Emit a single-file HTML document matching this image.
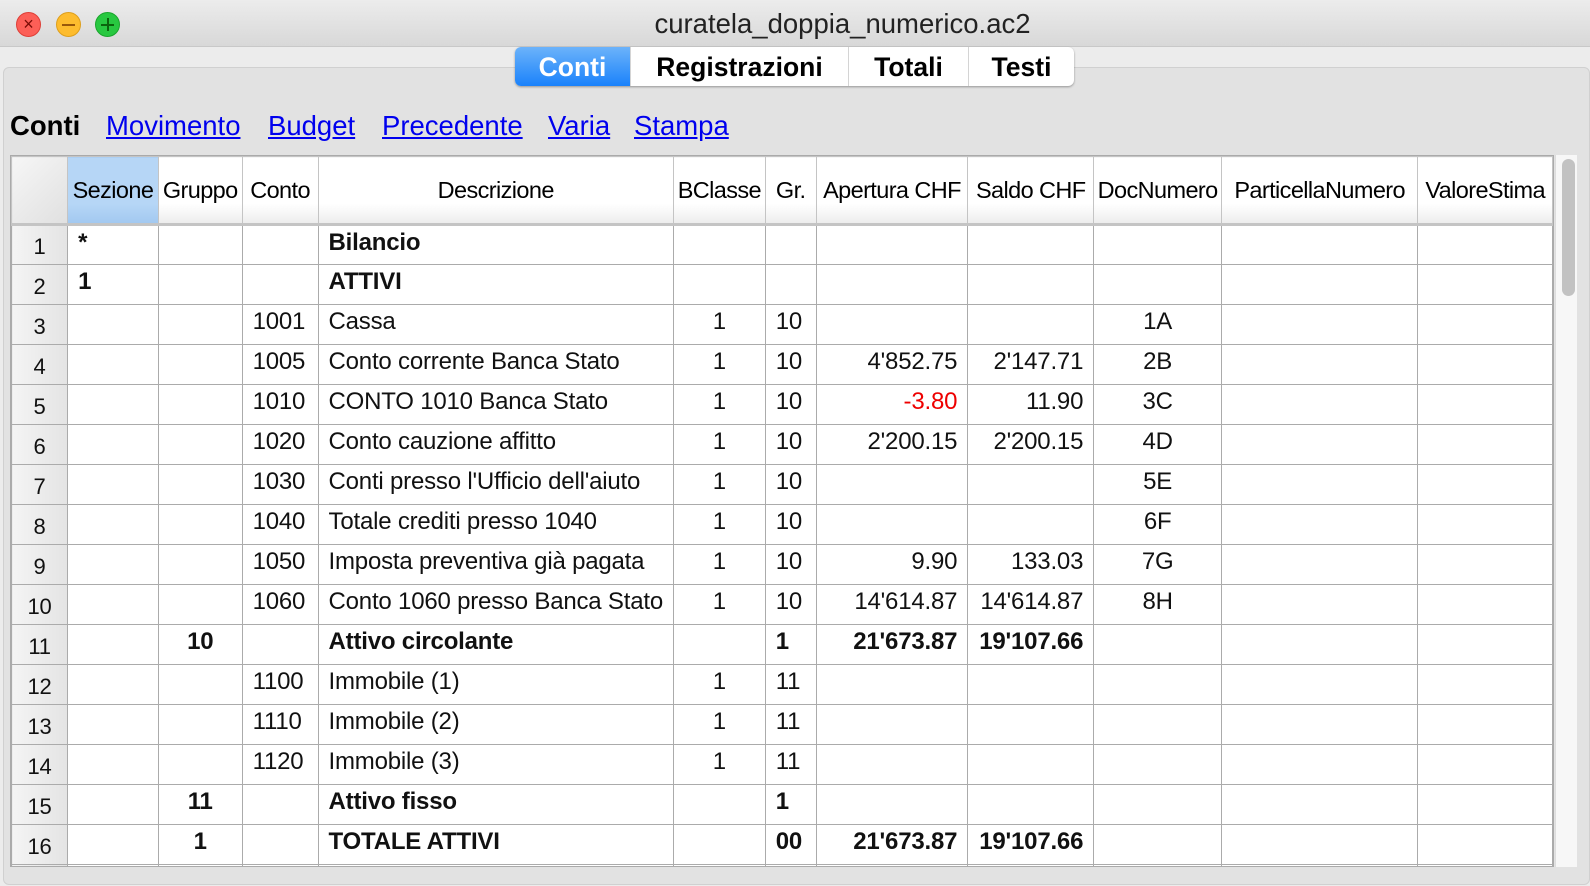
<!DOCTYPE html>
<html><head><style>
*{margin:0;padding:0;box-sizing:border-box}
body{width:1590px;height:886px;background:#ececec;font-family:"Liberation Sans",Arial,sans-serif;position:relative;overflow:hidden}
.title{position:absolute;left:0;top:0;width:1590px;height:47px;background:linear-gradient(#ececec,#d8d8d8);border-bottom:1px solid #c8c8c8}
.title span{position:absolute;left:0;width:1590px;top:8px;text-align:center;font-size:27.5px;color:#222;padding-left:95px}
.btn{position:absolute;top:12px;width:25px;height:25px;border-radius:50%;}
.panel{position:absolute;left:3px;top:67px;width:1587px;height:818px;background:#e2e2e2;border:1px solid #d0d0d0;border-radius:6px}
.tabs{position:absolute;left:515px;top:47px;height:39px;width:559px;background:#fff;border-radius:6px;box-shadow:0 1px 2px rgba(0,0,0,.35);display:flex;font-weight:bold;font-size:26.5px}
.tabs div{height:39px;line-height:40px;text-align:center;border-right:1px solid #d4d4d4}
.nav{position:absolute;top:110px;left:10px;font-size:27.5px;}
.nav b{position:absolute;top:0}
.nav a{position:absolute;top:0;color:#0000ee;text-decoration:underline;white-space:nowrap}
.grid{position:absolute;left:10px;top:155px;width:1544px;height:712px;background:#fff;border:1px solid #aaa;overflow:hidden}
table{border-collapse:collapse;table-layout:fixed;position:absolute;left:0;top:0}
td{border:1px solid #ababab;height:40px;font-size:24px;white-space:nowrap;overflow:hidden;padding:0 10px 5px;color:#111;letter-spacing:-.2px}
th{height:68px;font-weight:normal;font-size:23.5px;border:1px solid #c4c4c4;border-bottom:3px solid #c4c4c4;background:linear-gradient(#fff 70%,#ececec);white-space:nowrap;overflow:hidden;padding:0;letter-spacing:-.6px}
td.rh{background:linear-gradient(90deg,#f4f4f4,#e4e4e4);text-align:center;padding:4px 0 0;font-size:22px}
.r{text-align:right}.c{text-align:center}.b{font-weight:bold}.red{color:#e00}
.sb{position:absolute;left:1555px;top:155px;width:22px;height:712px;background:#f7f7f7;border-left:1px solid #ddd}
.sb div{position:absolute;left:6px;top:4px;width:13px;height:137px;border-radius:7px;background:#c2c2c2}
</style></head><body>
<div class="title"><span>curatela_doppia_numerico.ac2</span>
<div class="btn" style="left:16px;background:#fc5f57;border:1px solid #de3f37;color:#7a0c06;font-size:18px;line-height:22px;text-align:center">×</div>
<div class="btn" style="left:56px;background:#fdbc2e;border:1px solid #de9f1c"><div style="position:absolute;left:5px;top:10.5px;width:13px;height:2px;background:#99580a"></div></div>
<div class="btn" style="left:95px;background:#28c840;border:1px solid #1aa52c"><div style="position:absolute;left:5px;top:10.5px;width:13px;height:2px;background:#0b650d"></div><div style="position:absolute;left:10.5px;top:5px;width:2px;height:13px;background:#0b650d"></div></div>
</div>
<div class="panel"></div>
<div class="tabs">
<div style="width:116px;background:linear-gradient(#6cb3fa,#1a82fb);color:#fff;border-radius:6px 0 0 6px">Conti</div>
<div style="width:218px">Registrazioni</div>
<div style="width:120px">Totali</div>
<div style="width:105px;border:none">Testi</div>
</div>
<div class="nav"><b style="left:0">Conti</b><a style="left:96px">Movimento</a><a style="left:258px">Budget</a><a style="left:372px">Precedente</a><a style="left:538px">Varia</a><a style="left:624px">Stampa</a></div>
<div class="grid">
<table>
<colgroup><col style="width:57px"><col style="width:91px"><col style="width:84px"><col style="width:76px"><col style="width:353px"><col style="width:92px"><col style="width:51px"><col style="width:152px"><col style="width:126px"><col style="width:128px"><col style="width:197px"><col style="width:135px"></colgroup>
<tr><th style="background:linear-gradient(135deg,#f6f6f6,#e0e0e0)"></th><th style="background:linear-gradient(#b6d6f6 70%,#a2c8f0)">Sezione</th><th>Gruppo</th><th>Conto</th><th>Descrizione</th><th>BClasse</th><th>Gr.</th><th>Apertura CHF</th><th>Saldo CHF</th><th>DocNumero</th><th>ParticellaNumero</th><th>ValoreStima</th></tr>
<tr><td class="rh">1</td><td class="b">*</td><td></td><td></td><td class="b">Bilancio</td><td></td><td></td><td></td><td></td><td></td><td></td><td></td></tr>
<tr><td class="rh">2</td><td class="b">1</td><td></td><td></td><td class="b">ATTIVI</td><td></td><td></td><td></td><td></td><td></td><td></td><td></td></tr>
<tr><td class="rh">3</td><td></td><td></td><td>1001</td><td>Cassa</td><td class="c">1</td><td>10</td><td></td><td></td><td class="c">1A</td><td></td><td></td></tr>
<tr><td class="rh">4</td><td></td><td></td><td>1005</td><td>Conto corrente Banca Stato</td><td class="c">1</td><td>10</td><td class="r">4'852.75</td><td class="r">2'147.71</td><td class="c">2B</td><td></td><td></td></tr>
<tr><td class="rh">5</td><td></td><td></td><td>1010</td><td>CONTO 1010 Banca Stato</td><td class="c">1</td><td>10</td><td class="r red">-3.80</td><td class="r">11.90</td><td class="c">3C</td><td></td><td></td></tr>
<tr><td class="rh">6</td><td></td><td></td><td>1020</td><td>Conto cauzione affitto</td><td class="c">1</td><td>10</td><td class="r">2'200.15</td><td class="r">2'200.15</td><td class="c">4D</td><td></td><td></td></tr>
<tr><td class="rh">7</td><td></td><td></td><td>1030</td><td>Conti presso l'Ufficio dell'aiuto</td><td class="c">1</td><td>10</td><td></td><td></td><td class="c">5E</td><td></td><td></td></tr>
<tr><td class="rh">8</td><td></td><td></td><td>1040</td><td>Totale crediti presso 1040</td><td class="c">1</td><td>10</td><td></td><td></td><td class="c">6F</td><td></td><td></td></tr>
<tr><td class="rh">9</td><td></td><td></td><td>1050</td><td>Imposta preventiva già pagata</td><td class="c">1</td><td>10</td><td class="r">9.90</td><td class="r">133.03</td><td class="c">7G</td><td></td><td></td></tr>
<tr><td class="rh">10</td><td></td><td></td><td>1060</td><td>Conto 1060 presso Banca Stato</td><td class="c">1</td><td>10</td><td class="r">14'614.87</td><td class="r">14'614.87</td><td class="c">8H</td><td></td><td></td></tr>
<tr><td class="rh">11</td><td></td><td class="b c">10</td><td></td><td class="b">Attivo circolante</td><td></td><td class="b">1</td><td class="r b">21'673.87</td><td class="r b">19'107.66</td><td></td><td></td><td></td></tr>
<tr><td class="rh">12</td><td></td><td></td><td>1100</td><td>Immobile (1)</td><td class="c">1</td><td>11</td><td></td><td></td><td></td><td></td><td></td></tr>
<tr><td class="rh">13</td><td></td><td></td><td>1110</td><td>Immobile (2)</td><td class="c">1</td><td>11</td><td></td><td></td><td></td><td></td><td></td></tr>
<tr><td class="rh">14</td><td></td><td></td><td>1120</td><td>Immobile (3)</td><td class="c">1</td><td>11</td><td></td><td></td><td></td><td></td><td></td></tr>
<tr><td class="rh">15</td><td></td><td class="b c">11</td><td></td><td class="b">Attivo fisso</td><td></td><td class="b">1</td><td></td><td></td><td></td><td></td><td></td></tr>
<tr><td class="rh">16</td><td></td><td class="b c">1</td><td></td><td class="b">TOTALE ATTIVI</td><td></td><td class="b">00</td><td class="r b">21'673.87</td><td class="r b">19'107.66</td><td></td><td></td><td></td></tr>
<tr><td class="rh">17</td><td></td><td></td><td></td><td></td><td></td><td></td><td></td><td></td><td></td><td></td><td></td></tr>
</table>
</div>
<div class="sb"><div></div></div>
</body></html>
